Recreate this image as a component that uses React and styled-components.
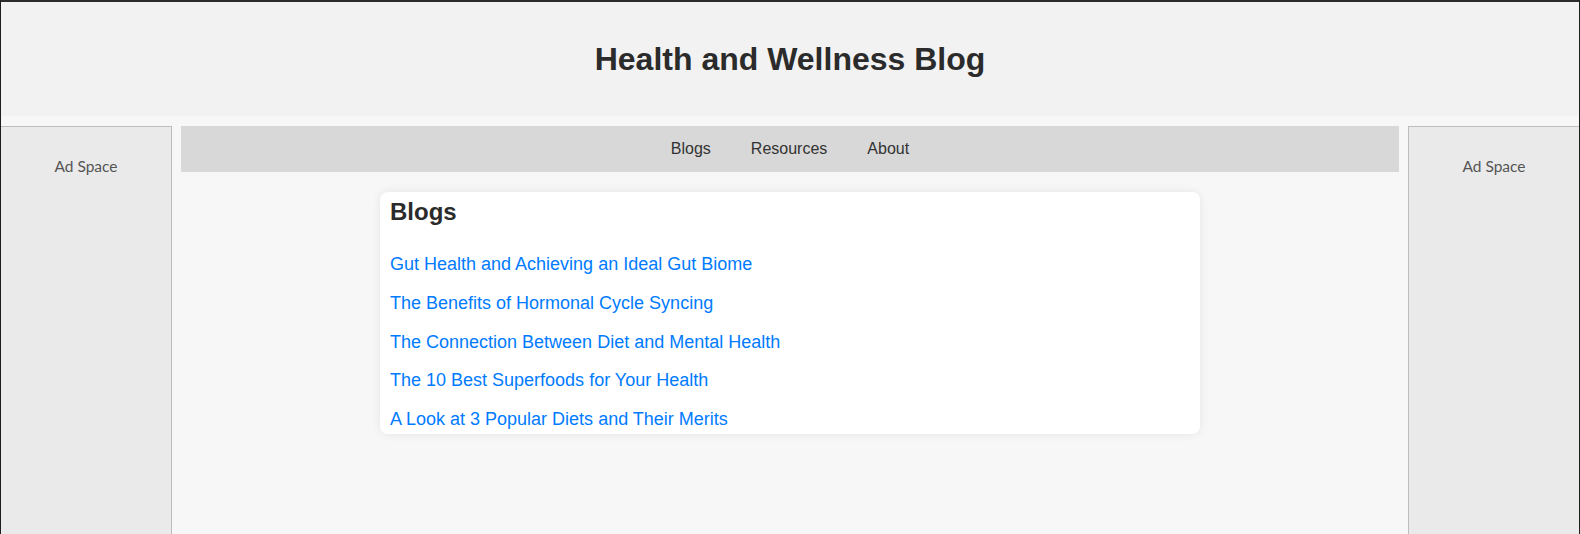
import React from 'react'
import styled, { createGlobalStyle } from 'styled-components'

const GlobalStyle = createGlobalStyle`
  html, body { margin:0; padding:0; }
  body { background:#f7f7f7; font-family:"Liberation Sans", Arial, sans-serif; color:#333; }
  * { box-sizing:border-box; }
`;

const Page = styled.div`
  min-height:100vh;
  display:flex; flex-direction:column;
  border-top:2px solid #2c2c2c;
  border-left:1px solid #1e1e1e;
  border-right:1px solid #1e1e1e;
  background:#f7f7f7;
`;

const Header = styled.header`
  height:114px;
  background:#f2f2f2;
  display:flex; align-items:center; justify-content:center;
  h1 { margin:0; font-size:32px; font-weight:700; color:#2b2b2b; }
`;

const Layout = styled.div`
  flex:1;
  display:flex;
  gap:9px;
  margin-top:10px;
`;

const Side = styled.aside`
  width:171px; flex-shrink:0;
  background:#eaeaea;
  border-top:1px solid #bdbdbd;
  border-${p => (p.$right ? 'left' : 'right')}:1px solid #bdbdbd;
  padding-top:30px;
  text-align:center;
  font-family:Lato, "Open Sans", sans-serif;
  font-size:15.5px;
  color:#555;
`;

const Main = styled.main`
  flex:1;
  display:flex; flex-direction:column; align-items:center;
`;

const Nav = styled.nav`
  align-self:stretch;
  height:46px;
  background:#d8d8d8;
  display:flex; align-items:center; justify-content:center;
  a { margin:0 20px; font-size:16px; color:#333; text-decoration:none; }
`;

const Card = styled.section`
  width:820px;
  margin-top:20px;
  background:#fff;
  border-radius:8px;
  box-shadow:0 0 10px rgba(0,0,0,0.08);
  padding:6px 10px 4px;
  h2 { margin:0; font-size:24px; font-weight:700; color:#2b2b2b; }
`;

const LinkList = styled.ul`
  list-style:none;
  margin:28px 0 0; padding:0;
  display:flex; flex-direction:column; gap:18.1px;
  a { font-size:18px; line-height:20.7px; color:#007bff; text-decoration:none; display:block; }
`;

const posts = [
  'Gut Health and Achieving an Ideal Gut Biome',
  'The Benefits of Hormonal Cycle Syncing',
  'The Connection Between Diet and Mental Health',
  'The 10 Best Superfoods for Your Health',
  'A Look at 3 Popular Diets and Their Merits',
];

export default function App() {
  return (
    <>
      <GlobalStyle />
      <Page>
        <Header><h1>Health and Wellness Blog</h1></Header>
        <Layout>
          <Side>Ad Space</Side>
          <Main>
            <Nav>
              <a href="#">Blogs</a>
              <a href="#">Resources</a>
              <a href="#">About</a>
            </Nav>
            <Card>
              <h2>Blogs</h2>
              <LinkList>
                {posts.map(t => <li key={t}><a href="#">{t}</a></li>)}
              </LinkList>
            </Card>
          </Main>
          <Side $right>Ad Space</Side>
        </Layout>
      </Page>
    </>
  );
}
